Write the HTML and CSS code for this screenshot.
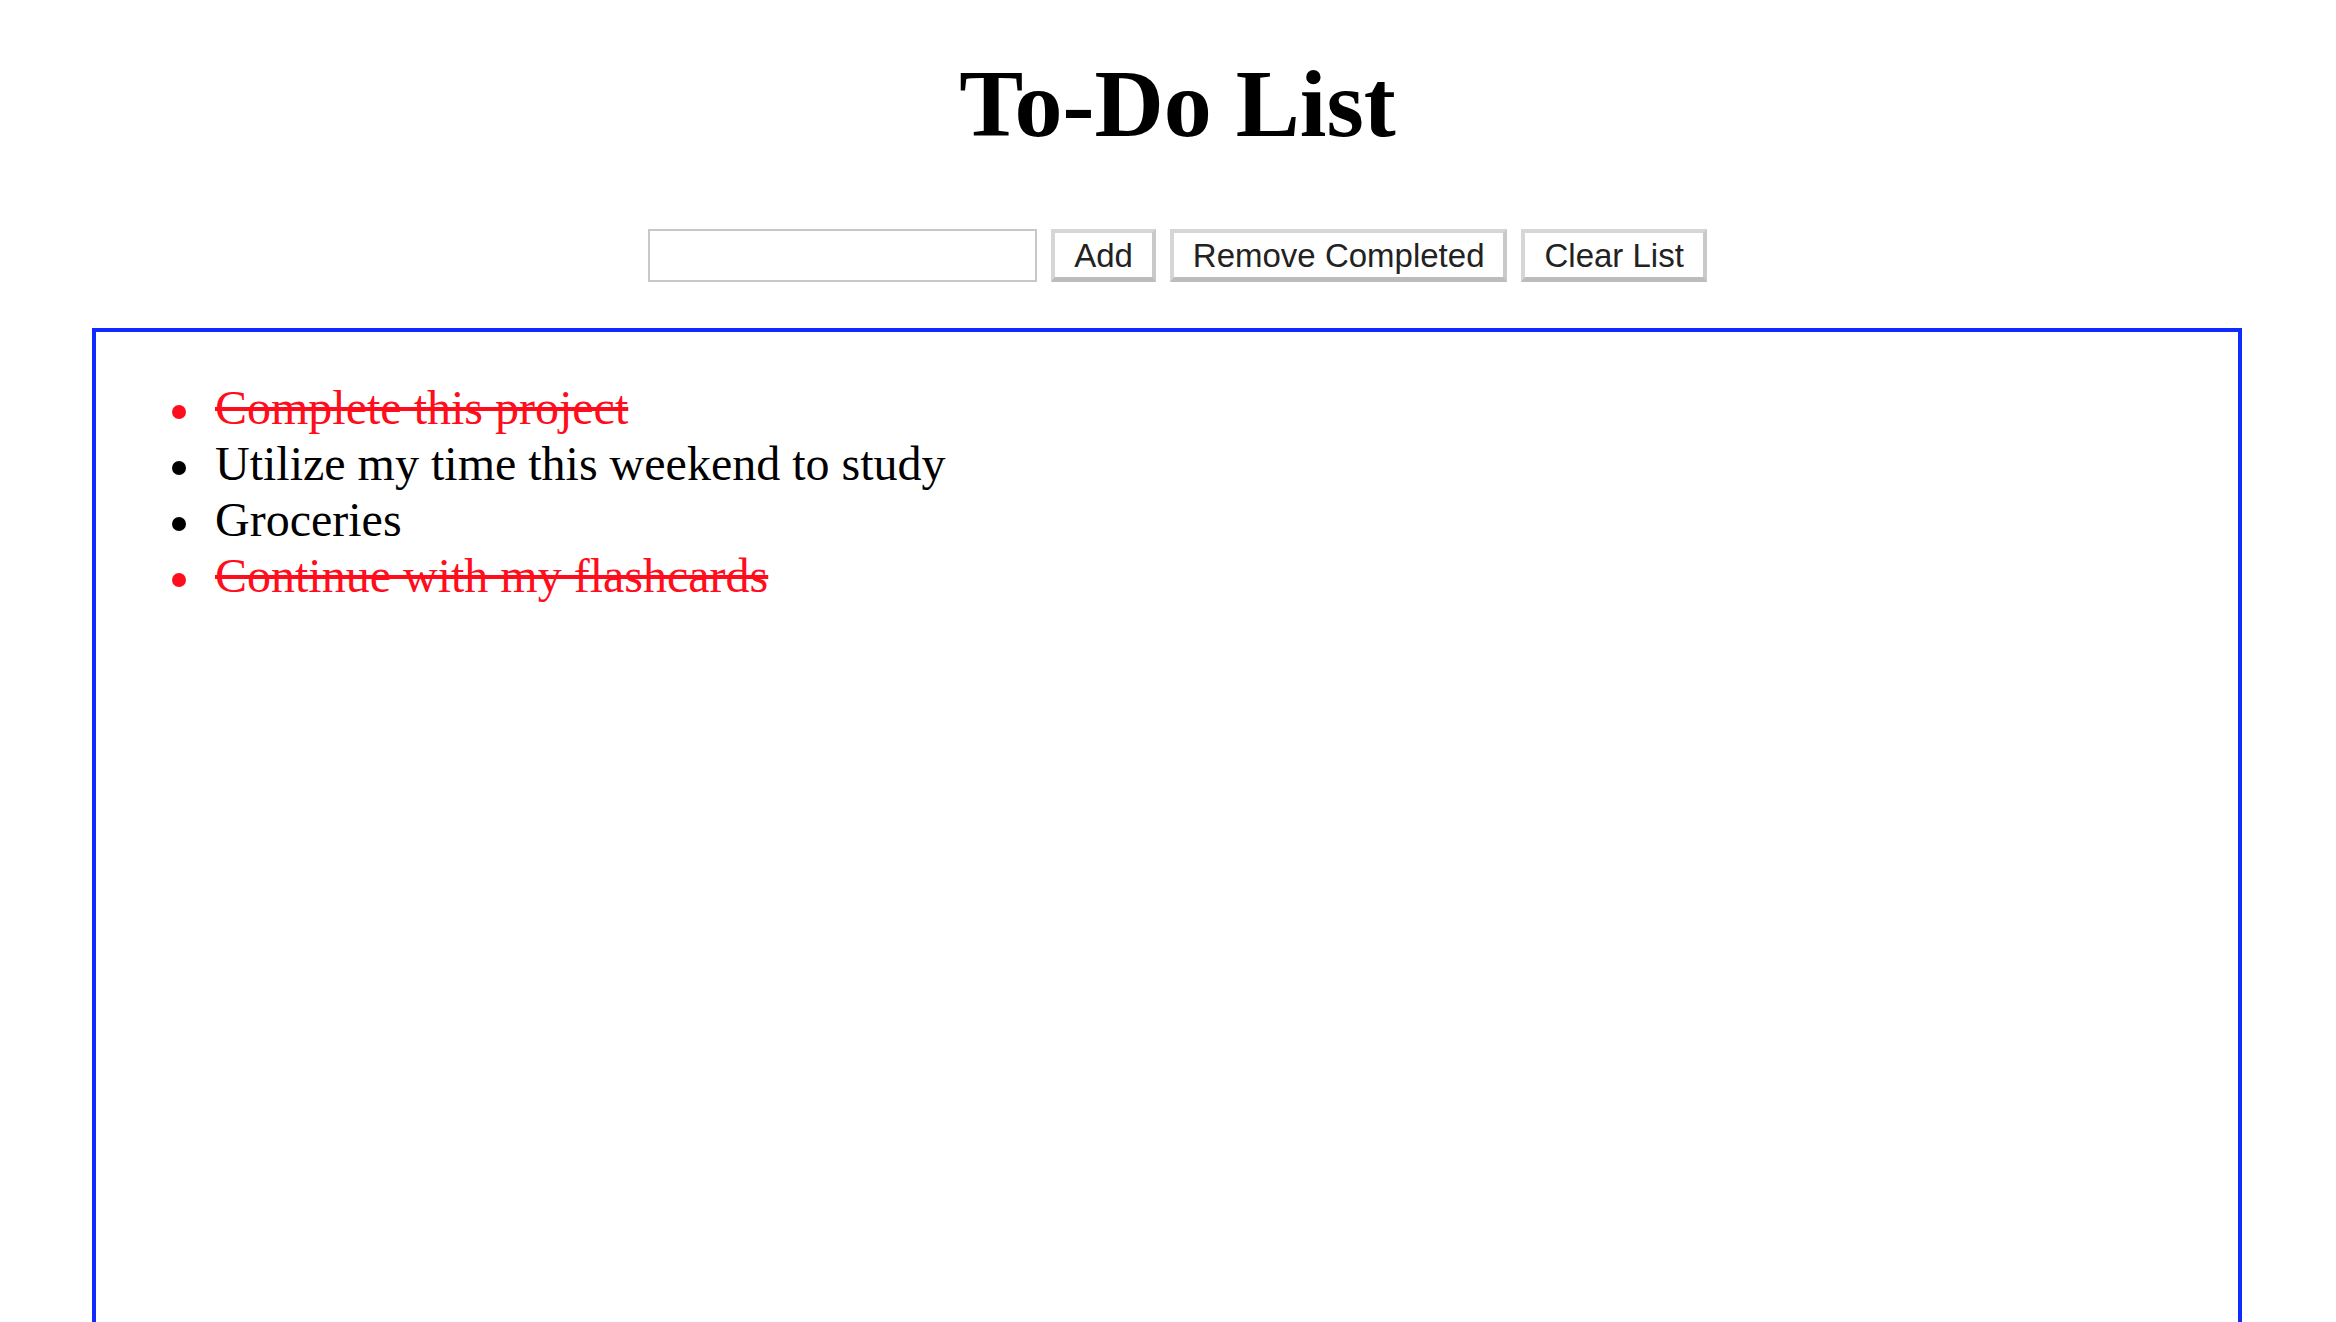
FILE: index.html
```html
<!DOCTYPE html>
<html>
<head>
<meta charset="utf-8">
<title>To-Do List</title>
<link rel="stylesheet" href="styles.css">
</head>
<body>
<header class="header">
  <h1 class="title">To-Do List</h1>
  <div class="controls">
    <input class="task-input" type="text">
    <button class="btn">Add</button>
    <button class="btn">Remove Completed</button>
    <button class="btn">Clear List</button>
  </div>
</header>
<main class="list-box">
  <ul class="todo-list">
    <li class="item done">Complete this project</li>
    <li class="item">Utilize my time this weekend to study</li>
    <li class="item">Groceries</li>
    <li class="item done">Continue with my flashcards</li>
  </ul>
</main>
</body>
</html>
```

FILE: styles.css
```css
html, body {
  margin: 0;
  padding: 0;
  background: #ffffff;
  overflow: hidden;
}

body {
  font-family: "Liberation Serif", "Times New Roman", serif;
  color: #000;
}

.header {
  padding-left: 19px;
  text-align: center;
}

.title {
  margin: 49px 0 0;
  font-size: 96px;
  line-height: 110px;
  font-weight: bold;
}

.controls {
  margin-top: 70px;
  display: flex;
  justify-content: center;
  align-items: center;
  gap: 14px;
}

.task-input {
  box-sizing: border-box;
  width: 389px;
  height: 53px;
  margin: 0;
  border: 2px solid #c8c8c8;
  background: #fff;
}

.btn {
  box-sizing: border-box;
  height: 53px;
  margin: 0;
  padding: 0 19px;
  background: #fff;
  border-style: solid;
  border-width: 4px 4px 5px 4px;
  border-color: #d6d6d6 #c9c9c9 #bcbcbc #d6d6d6;
  font-family: "Liberation Sans", Arial, sans-serif;
  font-size: 33px;
  color: #222;
  line-height: 1;
}

.list-box {
  margin: 46px 94px 0 92px;
  height: 1200px;
  border: 4px solid #0f2bff;
}

.todo-list {
  margin: 48px 0 0;
  padding-left: 119px;
  font-size: 48px;
  line-height: 56px;
  list-style: none;
}

.item {
  position: relative;
}

.item::before {
  content: "";
  position: absolute;
  left: -43px;
  top: 25px;
  width: 14px;
  height: 14px;
  border-radius: 50%;
  background: currentColor;
}

.item.done {
  color: #ff0d1c;
  text-decoration: line-through;
}
```
